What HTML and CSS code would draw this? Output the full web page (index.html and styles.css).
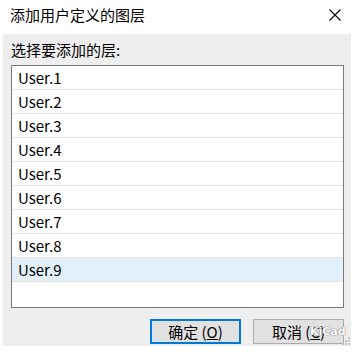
FILE: index.html
```html
<!DOCTYPE html>
<html lang="zh-CN">
<head>
    <meta charset="UTF-8">
    <title>添加用户定义的图层</title>
    <link rel="stylesheet" href="styles.css">
</head>
<body>
    <div class="dialog">
        <div class="title-bar">
            <span class="title">添加用户定义的图层</span>
            <svg class="close" width="12" height="12" viewBox="0 0 12 12">
                <path d="M0.5 0.5 L11.5 11.5 M11.5 0.5 L0.5 11.5" stroke="#000" stroke-width="1.1" fill="none"/>
            </svg>
        </div>
        <div class="panel">
            <div class="label">选择要添加的层:</div>
            <ul class="layer-list">
                <li class="layer">User.1</li>
                <li class="layer">User.2</li>
                <li class="layer">User.3</li>
                <li class="layer">User.4</li>
                <li class="layer">User.5</li>
                <li class="layer">User.6</li>
                <li class="layer">User.7</li>
                <li class="layer">User.8</li>
                <li class="layer selected">User.9</li>
            </ul>
            <div class="buttons">
                <button class="btn btn-default">确定 (<u>O</u>)</button>
                <button class="btn">取消 (<u>C</u>)</button>
            </div>
            <!-- watermark over the cancel button -->
            <span class="watermark">KiCad</span>
            <svg class="grip" width="10" height="10" viewBox="0 0 10 10">
                <rect x="7" y="1" width="2" height="2" fill="#c2c2c2"/>
                <rect x="4" y="4" width="2" height="2" fill="#c2c2c2"/>
                <rect x="7" y="4" width="2" height="2" fill="#c2c2c2"/>
                <rect x="1" y="7" width="2" height="2" fill="#c2c2c2"/>
                <rect x="4" y="7" width="2" height="2" fill="#c2c2c2"/>
                <rect x="7" y="7" width="2" height="2" fill="#c2c2c2"/>
            </svg>
        </div>
    </div>
</body>
</html>
```

FILE: styles.css
```css
body {
    margin: 0;
    padding: 0;
    background-color: #ffffff;
    font-family: "Noto Sans CJK SC", "Noto Sans", sans-serif;
    color: #000;
}
.dialog {
    width: 361px;
    height: 360px;
}
.title-bar {
    height: 34px;
    display: flex;
    align-items: center;
    justify-content: space-between;
    padding: 0 20px 4px 10px;
    box-sizing: border-box;
}
.title {
    font-size: 15px;
    line-height: 20px;
}
.close {
    display: block;
}
.panel {
    position: relative;
    margin-left: 3px;
    width: 348px;
    height: 312px;
    background-color: #eeeeee;
    padding: 6px 7px 0 8px;
    box-sizing: border-box;
}
.label {
    font-size: 15px;
    line-height: 20px;
}
.layer-list {
    list-style: none;
    margin: 5px 0 0 0;
    padding: 0;
    height: 243px;
    background-color: #ffffff;
    border: 1px solid #7a7a7a;
    box-sizing: border-box;
}
.layer {
    height: 24px;
    line-height: 23px;
    padding-left: 6px;
    font-size: 15px;
    border-bottom: 1px solid #e3e3e3;
    box-sizing: border-box;
}
.layer.selected {
    background-color: #e1f0fb;
}
.buttons {
    display: flex;
    justify-content: flex-end;
    gap: 12px;
    margin-top: 11px;
}
.btn {
    width: 91px;
    height: 25px;
    padding: 0;
    font-family: inherit;
    font-size: 15px;
    line-height: 20px;
    background-color: #e1e1e1;
    border: 1px solid #adadad;
    color: #000;
}
.btn-default {
    border: 2px solid #0078d7;
}
.watermark {
    position: absolute;
    left: 307px;
    top: 291px;
    white-space: nowrap;
    font-family: "DejaVu Sans", sans-serif;
    font-size: 11px;
    line-height: 14px;
    font-weight: bold;
    color: #ffffff;
    text-shadow: 0 0 1px #666, 0 0 1px #666;
}
.grip {
    position: absolute;
    right: 0;
    bottom: 0;
}
```
